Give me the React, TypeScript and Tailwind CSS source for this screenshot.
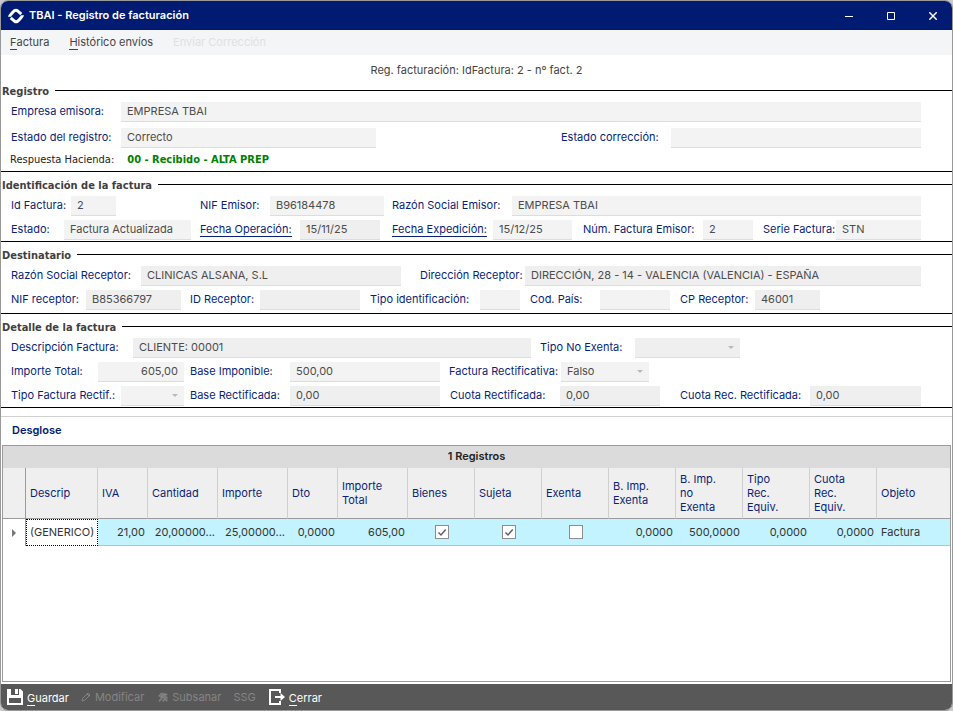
import { useId, type ReactNode } from "react";
import clsx from "clsx";

interface FieldProps {
  label: string;
  value?: string;
  cell: string;
  labelWidth: string;
  box: string;
  dark?: boolean;
  link?: boolean;
  select?: boolean;
  right?: boolean;
}

function Field({ label, value = "", cell, labelWidth, box, dark, link, select, right }: FieldProps) {
  const id = useId();
  const control = clsx(
    "block h-5 w-full appearance-none border-b border-[#dcdce2] px-1.5 pb-0.5 text-[11px] text-[#4c4c4c] opacity-100 outline-none",
    dark ? "bg-[#efefef]" : "bg-[#f3f3f3]",
    right && "text-right",
  );

  return (
    <div className={clsx("flex min-w-0 items-center", cell)}>
      <label htmlFor={id} className={clsx("shrink-0 pb-0.5 whitespace-nowrap text-[#0a1f78]", labelWidth)}>
        <span className={link ? "inline-block border-b border-[#0a1f78] leading-[14px]" : ""}>{label}</span>
      </label>
      <div className={clsx("relative", box)}>
        {select ? (
          <>
            <select id={id} disabled defaultValue={value} className={control}>
              <option value={value}>{value}</option>
            </select>
            <svg viewBox="0 0 6 3" className="pointer-events-none absolute top-2 right-[6px] h-[3px] w-[6px] fill-[#b9b9b9]">
              <path d="M0 0h6L3 3z" />
            </svg>
          </>
        ) : (
          <input id={id} type="text" readOnly defaultValue={value} className={control} />
        )}
      </div>
    </div>
  );
}

function Section({ title, className, children }: { title: string; className: string; children: ReactNode }) {
  return (
    <section className={clsx("border-b border-black", className)}>
      <div className="flex h-6 items-start gap-[6px] pl-px">
        <h2 className="mt-1 font-['DejaVu_Sans_Condensed','Noto_Sans',sans-serif] text-[11px] leading-5 font-bold text-[#3f3f3f]">
          {title}
        </h2>
        <div className="mt-3 h-px flex-1 bg-black" />
      </div>
      {children}
    </section>
  );
}

function Row({ children }: { children: ReactNode }) {
  return <div className="flex pr-[31px] pl-[10px]">{children}</div>;
}

const columns = [
  { title: "Descrip", value: "(GENERICO)", width: "w-[72px]", align: "left" },
  { title: "IVA", value: "21,00", width: "w-[50px]", align: "right" },
  { title: "Cantidad", value: "20,00000...", width: "w-[70px]", align: "right" },
  { title: "Importe", value: "25,00000...", width: "w-[70px]", align: "right" },
  { title: "Dto", value: "0,0000", width: "w-[50px]", align: "right" },
  { title: "Importe Total", value: "605,00", width: "w-[70px]", align: "right" },
  { title: "Bienes", value: true, width: "w-[67px]" },
  { title: "Sujeta", value: true, width: "w-[67px]" },
  { title: "Exenta", value: false, width: "w-[67px]" },
  { title: "B. Imp. Exenta", value: "0,0000", width: "w-[67px]", align: "right" },
  { title: "B. Imp. no Exenta", value: "500,0000", width: "w-[67px]", align: "right" },
  { title: "Tipo Rec. Equiv.", value: "0,0000", width: "w-[67px]", align: "right" },
  { title: "Cuota Rec. Equiv.", value: "0,0000", width: "w-[67px]", align: "right" },
  { title: "Objeto", value: "Factura", width: "", align: "left" },
];

function Check({ checked, label }: { checked: boolean; label: string }) {
  return (
    <span className="relative mx-auto block h-[14px] w-[14px]">
      <input
        type="checkbox"
        aria-label={label}
        defaultChecked={checked}
        className="peer block h-[14px] w-[14px] appearance-none border border-[#8e8e8e] bg-white"
      />
      <svg
        viewBox="0 0 14 14"
        className="pointer-events-none absolute inset-0 hidden fill-none stroke-[#606060] stroke-[1.5] peer-checked:block"
      >
        <path d="M3.5 7.5 6 10l4.700-5.500" />
      </svg>
    </span>
  );
}

function DetailTable() {
  return (
    <table className="w-full table-fixed border-separate border-spacing-0">
      <colgroup>
        <col className="w-[23px]" />
        {columns.map((c) => (
          <col key={c.title} className={c.width} />
        ))}
      </colgroup>
      <thead>
        <tr className="h-[51px] bg-[#efefef] text-left leading-[14px] text-[#0a1f78]">
          <th aria-label="Fila" className="border-r border-b border-[#9b9b9b]" />
          {columns.map((c, i) => (
            <th
              key={c.title}
              className={clsx(
                "border-b border-b-[#9b9b9b] pr-4 pl-1 font-normal",
                i < columns.length - 1 && "border-r border-r-[#cfcfcf]",
              )}
            >
              {c.title}
            </th>
          ))}
        </tr>
      </thead>
      <tbody>
        <tr className="h-[27px] text-[#333]">
          <td className="border-r border-[#9b9b9b]">
            <svg viewBox="0 0 4 8" className="mx-auto h-2 w-1 fill-[#777]">
              <path d="M0 0v8l4-4z" />
            </svg>
          </td>
          {columns.map((c, i) =>
            typeof c.value === "boolean" ? (
              <td key={c.title} className="border-b border-[#b9c3c6] bg-[#c2f3fe]">
                <Check checked={c.value} label={c.title} />
              </td>
            ) : (
              <td
                key={c.title}
                className={clsx(
                  "whitespace-nowrap",
                  i === 0
                    ? "border border-dotted border-black bg-white pb-0.5 pl-[3px]"
                    : "border-b border-[#b9c3c6] bg-[#c2f3fe] pr-[3px] pl-1",
                  c.align === "right" && "text-right",
                )}
              >
                {c.value}
              </td>
            ),
          )}
        </tr>
      </tbody>
    </table>
  );
}

function TitleBar() {
  return (
    <header className="flex h-[29px] items-center bg-[#001b71] pl-[7px] text-white">
      <svg viewBox="0 0 16 16" className="h-4 w-4 fill-none stroke-white stroke-[3]">
        <path d="M1.500 8.800C1.500 7.500 5.500 3.400 6.700 2.600q1.300-.8 2.600 0l4 3.600" />
        <path d="M14.500 7.200c0 1.300-4 5.400-5.200 6.200q-1.300.8-2.600 0l-4-3.600" />
      </svg>
      <h1 className="ml-[5px] flex-1 pb-0.5 text-[11px] font-semibold">TBAI - Registro de facturación</h1>
      <button type="button" aria-label="Minimizar" className="flex w-[38px] justify-center">
        <svg viewBox="0 0 8 8" className="h-2 w-2 stroke-white">
          <path d="M0 4.500h8" />
        </svg>
      </button>
      <button type="button" aria-label="Maximizar" className="flex w-[46px] justify-center">
        <svg viewBox="0 0 8 8" className="h-2 w-2 fill-none stroke-white">
          <path d="M.5.5h7v7h-7z" />
        </svg>
      </button>
      <button type="button" aria-label="Cerrar ventana" className="flex w-[38px] justify-center">
        <svg viewBox="0 0 8 8" className="h-2 w-2 stroke-white stroke-[1.5]">
          <path d="m.3.3 7.400 7.400m0-7.400L.3 7.700" />
        </svg>
      </button>
    </header>
  );
}

function Mnemonic({ text }: { text: string }) {
  return (
    <>
      <span className="inline-block border-b border-current leading-[14px]">{text[0]}</span>
      {text.slice(1)}
    </>
  );
}

function FooterBar() {
  return (
    <footer className="flex h-[26px] items-center bg-[#585858] pl-[6px] text-[#858585]">
      <button type="button" className="flex items-center gap-1 text-white">
        <svg viewBox="0 0 16 16" className="h-4 w-4">
          <path className="fill-white" fillRule="evenodd" d="M0 0h4v6h8V0h1.500L16 2.500V16H0zM2 9v5h12V9z" />
          <path className="fill-white" d="M8 0h3v5H8z" />
        </svg>
        <span className="pt-0.5">
          <Mnemonic text="Guardar" />
        </span>
      </button>
      <button type="button" disabled className="ml-3 flex items-center gap-1">
        <svg viewBox="0 0 10 10" className="h-[10px] w-[10px] fill-none stroke-[#858585]">
          <path d="M1 9l.7-2.700L7 1l2 2-5.300 5.300zM6 2l2 2" />
        </svg>
        Modificar
      </button>
      <button type="button" disabled className="ml-[14px] flex items-center gap-1">
        <svg viewBox="0 0 10 10" className="h-[10px] w-[10px] fill-none stroke-[#858585] stroke-[1.5]">
          <path d="M.7 4.500 4.500.8M2.300 5.500 6 1.800l3.300 1M4 3.800l5.300 5.300M5.500 2.500 9.500 6.500M1 9.200 4.500 5.500M4.500 9.500 6.500 7.500" />
        </svg>
        Subsanar
      </button>
      <button type="button" disabled className="ml-[12px]">
        SSG
      </button>
      <button type="button" className="ml-[13px] flex items-center gap-1 text-white">
        <svg viewBox="0 0 16 16" className="h-4 w-4 fill-none stroke-white stroke-2">
          <path d="M11 4V1H1v14h10v-3M6 8h7" />
          <path className="fill-white stroke-none" d="M11.500 4 16 8l-4.500 4z" />
        </svg>
        <span className="pt-0.5">
          <Mnemonic text="Cerrar" />
        </span>
      </button>
    </footer>
  );
}

export default function App() {
  return (
    <div className="min-h-screen bg-[#c9c9c9] font-['Inter',sans-serif] text-[11px] leading-4">
      <div className="flex min-h-screen flex-col overflow-hidden rounded-lg border border-[#999] bg-white">
        <TitleBar />
        <nav className="flex h-[25px] items-center gap-5 bg-[#f4f5f7] pb-0.5 pl-[9px] text-[#444]">
          <button type="button">
            <Mnemonic text="Factura" />
          </button>
          <button type="button">
            <Mnemonic text="Histórico envíos" />
          </button>
          <button type="button" disabled className="text-[#dfe1e4]">
            Enviar Corrección
          </button>
        </nav>

        <main className="flex flex-1 flex-col">
          <p className="flex h-[23px] items-end justify-center text-[#444]">Reg. facturación: IdFactura: 2 - nº fact. 2</p>

          <Section title="Registro" className="">
            <div className="flex flex-col gap-[6px]">
              <Row>
                <Field label="Empresa emisora:" value="EMPRESA TBAI" cell="flex-1" labelWidth="w-[110px]" box="flex-1" />
              </Row>
              <Row>
                <Field label="Estado del registro:" value="Correcto" cell="" labelWidth="w-[110px]" box="w-[255px]" />
                <Field label="Estado corrección:" cell="ml-auto" labelWidth="w-[110px]" box="w-[250px]" />
              </Row>
            </div>
            <div className="flex h-[23px] items-center gap-[13px] pl-[9px] font-['DejaVu_Sans_Condensed','Noto_Sans',sans-serif]">
              <span className="text-[#222]">Respuesta Hacienda:</span>
              <strong className="text-[#008000]">00 - Recibido - ALTA PREP</strong>
            </div>
          </Section>

          <Section title="Identificación de la factura" className="pb-px">
            <div className="flex flex-col gap-1">
              <Row>
                <Field label="Id Factura:" value="2" cell="w-[189px]" labelWidth="w-[60px]" box="w-[45px]" />
                <Field label="NIF Emisor:" value="B96184478" cell="w-[192px]" labelWidth="w-[70px]" box="w-[114px]" />
                <Field label="Razón Social Emisor:" value="EMPRESA TBAI" cell="flex-1" labelWidth="w-[120px]" box="flex-1" />
              </Row>
              <Row>
                <Field label="Estado:" value="Factura Actualizada" cell="w-[189px]" labelWidth="w-[53px]" box="w-[127px]" />
                <Field label="Fecha Operación:" value="15/11/25" cell="w-[192px]" labelWidth="w-[100px]" box="w-[80px]" dark link />
                <Field label="Fecha Expedición:" value="15/12/25" cell="w-[191px]" labelWidth="w-[101px]" box="w-[79px]" link />
                <Field label="Núm. Factura Emisor:" value="2" cell="w-[180px]" labelWidth="w-[120px]" box="w-[50px]" />
                <Field label="Serie Factura:" value="STN" cell="flex-1" labelWidth="w-[73px]" box="flex-1" />
              </Row>
            </div>
          </Section>

          <Section title="Destinatario" className="pb-[3px]">
            <div className="flex flex-col gap-1">
              <Row>
                <Field label="Razón Social Receptor:" value="CLINICAS ALSANA, S.L" cell="w-[409px]" labelWidth="w-[130px]" box="w-[260px]" dark />
                <Field
                  label="Dirección Receptor:"
                  value="DIRECCIÓN, 28 - 14 - VALENCIA (VALENCIA) - ESPAÑA"
                  cell="flex-1"
                  labelWidth="w-[105px]"
                  box="flex-1"
                  dark
                />
              </Row>
              <Row>
                <Field label="NIF receptor:" value="B85366797" cell="w-[179px]" labelWidth="w-[75px]" box="w-[95px]" dark />
                <Field label="ID Receptor:" cell="w-[180px]" labelWidth="w-[70px]" box="w-[100px]" dark />
                <Field label="Tipo identificación:" cell="w-[160px]" labelWidth="w-[110px]" box="w-[40px]" />
                <Field label="Cod. País:" cell="w-[150px]" labelWidth="w-[70px]" box="w-[70px]" />
                <Field label="CP Receptor:" value="46001" cell="" labelWidth="w-[75px]" box="w-[65px]" dark />
              </Row>
            </div>
          </Section>

          <Section title="Detalle de la factura" className="pb-px">
            <div className="flex flex-col gap-1">
              <Row>
                <Field label="Descripción Factura:" value="CLIENTE: 00001" cell="w-[529px]" labelWidth="w-[122px]" box="w-[398px]" dark />
                <Field label="Tipo No Exenta:" cell="" labelWidth="w-[95px]" box="w-[105px]" dark select />
              </Row>
              <Row>
                <Field label="Importe Total:" value="605,00" cell="w-[179px]" labelWidth="w-[87px]" box="w-[86px]" right />
                <Field label="Base Imponible:" value="500,00" cell="w-[259px]" labelWidth="w-[100px]" box="w-[150px]" />
                <Field label="Factura Rectificativa:" value="Falso" cell="" labelWidth="w-[112px]" box="w-[88px]" select />
              </Row>
              <Row>
                <Field label="Tipo Factura Rectif.:" cell="w-[179px]" labelWidth="w-[110px]" box="w-[63px]" select />
                <Field label="Base Rectificada:" value="0,00" cell="w-[260px]" labelWidth="w-[100px]" box="w-[150px]" dark />
                <Field label="Cuota Rectificada:" value="0,00" cell="w-[230px]" labelWidth="w-[110px]" box="w-[100px]" dark />
                <Field label="Cuota Rec. Rectificada:" value="0,00" cell="flex-1" labelWidth="w-[130px]" box="flex-1" dark />
              </Row>
            </div>
          </Section>

          <section className="mt-2 flex flex-1 flex-col border-t border-[#d0d0d0] px-px pb-[2px]">
            <h2 className="flex h-7 items-center pb-0.5 pl-[10px] font-semibold text-[#001b71]">Desglose</h2>
            <div className="flex-1 border border-[#9b9b9b]">
              <div className="flex h-[22px] items-center justify-center bg-[#dbdbdb] pb-0.5 font-semibold text-[#222]">
                1 Registros
              </div>
              <DetailTable />
            </div>
          </section>
        </main>

        <FooterBar />
      </div>
    </div>
  );
}
